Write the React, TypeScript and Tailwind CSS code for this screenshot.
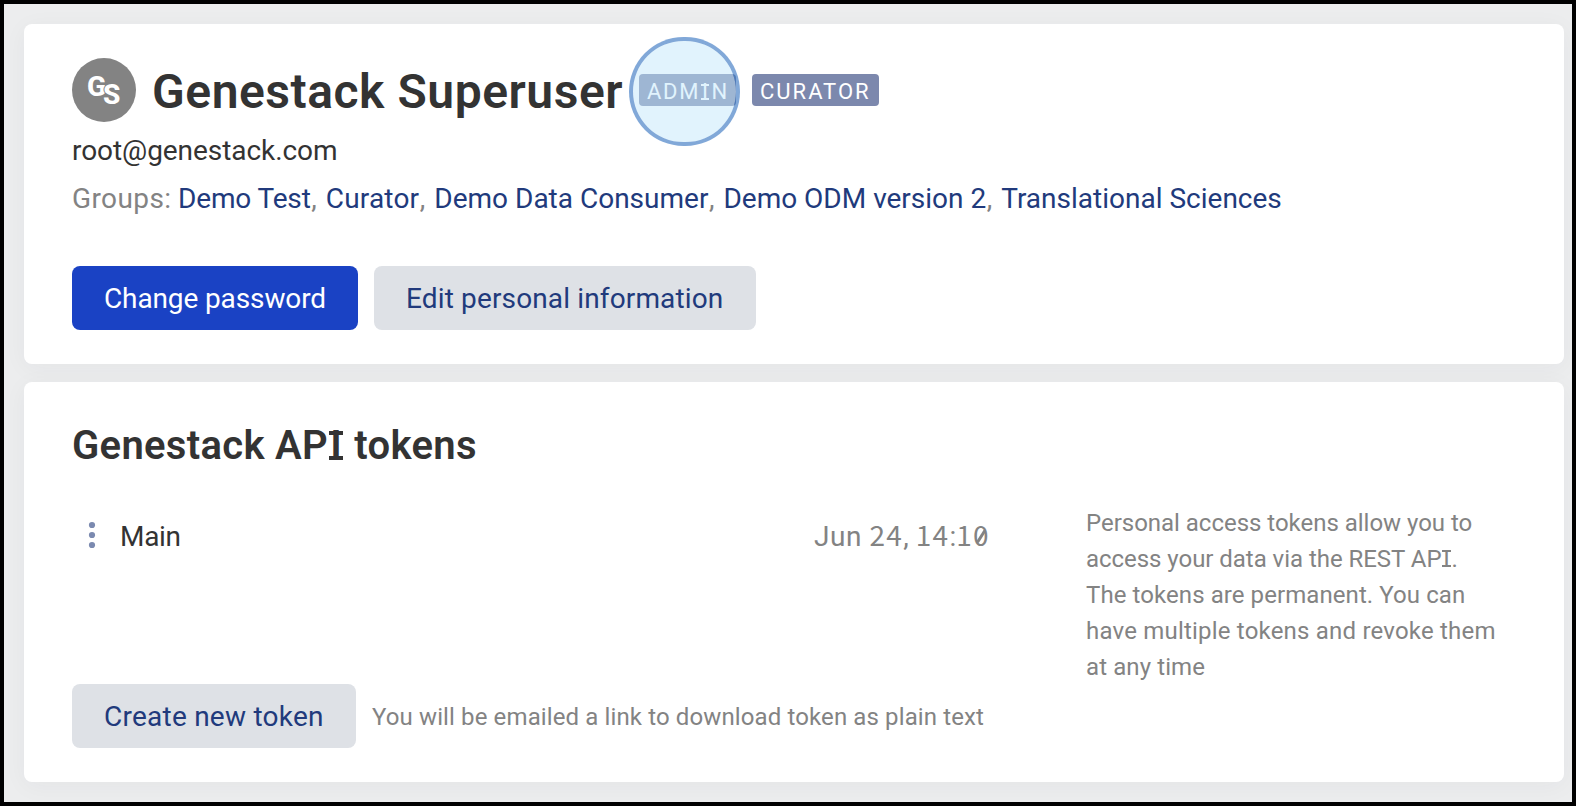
import type { ReactNode } from 'react';

const groups = [
  { name: 'Demo Test', tracking: 'tracking-[-0.14px]' },
  { name: 'Curator', tracking: 'tracking-[0.2px]' },
  { name: 'Demo Data Consumer', tracking: 'tracking-[0px]' },
  { name: 'Demo ODM version 2', tracking: 'tracking-[0px]' },
  { name: 'Translational Sciences', tracking: 'tracking-[0px]' },
];

const description = [
  { text: 'Personal access tokens allow you to', tracking: 'tracking-[-0.02px]' },
  { text: 'access your data via the REST AP', tracking: 'tracking-[-0.04px]', end: true },
  { text: 'The tokens are permanent. You can', tracking: 'tracking-[0.08px]' },
  { text: 'have multiple tokens and revoke them', tracking: 'tracking-[0.2px]' },
  { text: 'at any time', tracking: 'tracking-[0.1px]' },
];

function Card({ className, children }: { className: string; children: ReactNode }) {
  return (
    <section className={`rounded-lg bg-white px-12 shadow-[0_4px_24px_rgba(40,50,60,0.045)] ${className}`}>
      {children}
    </section>
  );
}

function Button({ className, children }: { className: string; children: ReactNode }) {
  return (
    <button type="button" className={`h-16 shrink-0 rounded-lg pl-8 text-left text-[28px] leading-[64px] whitespace-nowrap ${className}`}>
      <span className="block h-16 pt-px">{children}</span>
    </button>
  );
}

function Badge({ className, children }: { className: string; children: ReactNode }) {
  return (
    <span className={`h-8 shrink-0 rounded bg-[#7c88ad] pl-2 text-[22px] leading-[35px] whitespace-nowrap text-white ${className}`}>
      {children}
    </span>
  );
}

/* Capital I with slab serifs at the cap height and the baseline. */
function SerifI({ className, bars }: { className: string; bars: string }) {
  return (
    <span className={`relative inline-block text-center leading-none tracking-normal ${className}`}>
      I
      <span className={`absolute top-[0.13em] right-[0.03em] left-[0.03em] bg-current ${bars}`} />
      <span className={`absolute right-[0.03em] bottom-[0.158em] left-[0.03em] bg-current ${bars}`} />
    </span>
  );
}

function Digits({ children }: { children: ReactNode }) {
  return <span className="font-['Noto_Sans_CJK_JP',sans-serif] leading-none tracking-[1.35px]">{children}</span>;
}

export default function App() {
  return (
    <div className="h-[806px] w-[1576px] overflow-hidden border-4 border-black bg-[#ecedee] pt-5 pr-2 pl-5 font-['Roboto',sans-serif] text-[#333333]">
      <Card className="h-[340px] pt-[34px]">
        <header className="flex h-16 items-center">
          <div className="relative size-16 shrink-0 rounded-full bg-[#838383] text-[28px] leading-none font-extrabold text-white">
            <span className="absolute top-[15px] left-[15px]">G</span>
            <span className="absolute top-[23px] left-[31px] [text-shadow:-1px_0_0_#838383]">S</span>
          </div>
          <h1 className="ml-4 w-[487px] pt-[4px] text-[48px] leading-[60px] font-[570] tracking-[0.54px] whitespace-nowrap">
            Genestack Superuser
          </h1>
          <div className="relative flex">
            <Badge className="w-[97px] tracking-[1.7px]">
              ADM<SerifI className="mr-[1.5px] w-[10px]" bars="h-[2px]" />N
            </Badge>
            <div className="absolute -top-[37px] -left-[10px] h-[109px] w-[110.5px] rounded-full border-4 border-[rgba(52,115,192,0.62)] bg-[rgba(194,230,251,0.49)] bg-clip-padding" />
          </div>
          <Badge className="ml-4 w-[127px] tracking-[2px]">CURATOR</Badge>
        </header>
        <p className="mt-[5px] text-[28px] leading-[48px] tracking-[-0.06px]">root@genestack.com</p>
        <p className="flex text-[28px] leading-[48px] whitespace-nowrap text-[#838383]">
          <span className="w-[106px] tracking-[0.4px]">Groups:</span>
          {groups.map((g, i) => (
            <span key={g.name} className="mr-[9px]">
              <a className={`text-[#213a7c] ${g.tracking}`}>{g.name}</a>
              {i < groups.length - 1 && <span className="ml-[0.5px]">,</span>}
            </span>
          ))}
        </p>
        <div className="mt-[43px] flex gap-4">
          <Button className="w-[286px] bg-[#1a42c4] tracking-[-0.12px] text-white">Change password</Button>
          <Button className="w-[382px] bg-[#dee1e6] tracking-[0.14px] text-[#213a7c]">Edit personal information</Button>
        </div>
      </Card>

      <Card className="mt-[18px] h-[400px] pt-[34px]">
        <h2 className="text-[40px] leading-[60px] font-[570] tracking-[0.3px]">
          Genestack AP<SerifI className="w-[16px]" bars="h-[4px]" /> tokens
        </h2>
        <div className="mt-[29px] flex h-[243px]">
          <div className="flex w-[918px] flex-col justify-between pt-[7px]">
            <div className="flex h-12 items-center text-[28px] leading-[48px]">
              <svg width="48" height="48" viewBox="0 0 48 48" fill="#7b8ab0">
                <circle cx="20" cy="13" r="3.1" />
                <circle cx="20" cy="23" r="3.1" />
                <circle cx="20" cy="33" r="3.1" />
              </svg>
              <span className="mt-[2px] tracking-[-0.3px]">Main</span>
              <span className="mt-[2px] ml-auto text-[#838383]">
                <span className="tracking-[0.5px]">Jun </span>
                <Digits>24</Digits>, <Digits>14</Digits>
                <span>:</span>
                <Digits>
                  1
                  <span className="relative inline-block">
                    0<span className="absolute top-[15px] left-[0.5px] h-[2.5px] w-[14px] -rotate-[58deg] bg-[#838383]" />
                  </span>
                </Digits>
              </span>
            </div>
            <div className="flex items-center gap-4">
              <Button className="w-[284px] bg-[#dee1e6] tracking-[0.24px] text-[#213a7c]">Create new token</Button>
              <span className="pt-[2px] text-[24px] tracking-[0.12px] whitespace-nowrap text-[#838383]">
                You will be emailed a link to download token as plain text
              </span>
            </div>
          </div>
          <p className="ml-24 text-[24px] leading-[36px] whitespace-nowrap text-[#838383]">
            {description.map((line) => (
              <span key={line.text} className={`block ${line.tracking}`}>
                {line.text}
                {line.end && (
                  <>
                    <SerifI className="w-[10px]" bars="h-[2px]" />.
                  </>
                )}
              </span>
            ))}
          </p>
        </div>
      </Card>
    </div>
  );
}
